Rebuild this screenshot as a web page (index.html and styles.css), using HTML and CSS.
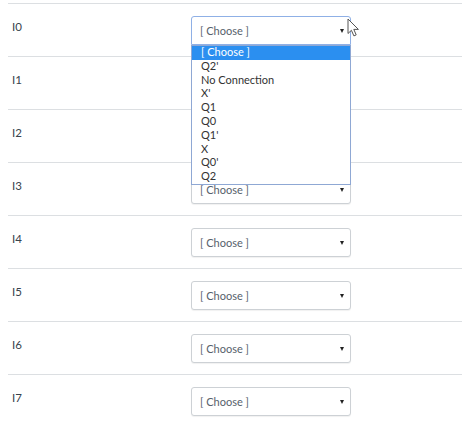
FILE: index.html
```html
<!DOCTYPE html>
<html>
<head>
<meta charset="utf-8">
<link rel="stylesheet" href="styles.css">
</head>
<body>
<div class="list">
  <div class="row">
    <div class="label">I0</div>
    <div class="cell">
      <div class="select focused"><span class="val">[ Choose ]</span><span class="arrow"></span></div>
      <ul class="dropdown">
        <li class="hl">[ Choose ]</li>
        <li>Q2'</li>
        <li>No Connection</li>
        <li>X'</li>
        <li>Q1</li>
        <li>Q0</li>
        <li>Q1'</li>
        <li>X</li>
        <li>Q0'</li>
        <li>Q2</li>
      </ul>
      <svg class="cursor" width="13" height="19" viewBox="0 0 13 19"><path d="M1 1 L1 15.5 L4.4 12.3 L6.9 17.9 L9.2 16.9 L6.8 11.4 L11.4 11.4 Z" fill="#fff" stroke="#555" stroke-width="1" stroke-linejoin="round"/></svg>
    </div>
  </div>
  <div class="row">
    <div class="label">I1</div>
    <div class="cell"><div class="select"><span class="val">[ Choose ]</span><span class="arrow"></span></div></div>
  </div>
  <div class="row">
    <div class="label">I2</div>
    <div class="cell"><div class="select"><span class="val">[ Choose ]</span><span class="arrow"></span></div></div>
  </div>
  <div class="row">
    <div class="label">I3</div>
    <div class="cell"><div class="select"><span class="val">[ Choose ]</span><span class="arrow"></span></div></div>
  </div>
  <div class="row">
    <div class="label">I4</div>
    <div class="cell"><div class="select"><span class="val">[ Choose ]</span><span class="arrow"></span></div></div>
  </div>
  <div class="row">
    <div class="label">I5</div>
    <div class="cell"><div class="select"><span class="val">[ Choose ]</span><span class="arrow"></span></div></div>
  </div>
  <div class="row">
    <div class="label">I6</div>
    <div class="cell"><div class="select"><span class="val">[ Choose ]</span><span class="arrow"></span></div></div>
  </div>
  <div class="row">
    <div class="label">I7</div>
    <div class="cell"><div class="select"><span class="val">[ Choose ]</span><span class="arrow"></span></div></div>
  </div>
</div>
</body>
</html>
```
FILE: styles.css
```css
html, body {
  margin: 0;
  padding: 0;
  background: #fff;
}
body {
  font-family: Lato, "Open Sans", sans-serif;
  font-size: 11px;
  color: #2d3b45;
}
.list {
  margin: 3px 0 0 8px;
  width: 454px;
}
.row {
  display: grid;
  grid-template-columns: 183px 160px;
  height: 53px;
  box-sizing: border-box;
  border-top: 1px solid #dcdfe2;
}
.label {
  padding: 15px 0 0 4px;
  line-height: 15px;
  font-size: 11.5px;
  color: #38434c;
}
.cell {
  position: relative;
  padding-top: 12px;
}
.select {
  box-sizing: border-box;
  height: 29px;
  border: 1px solid #cdd1d5;
  border-radius: 3px;
  display: flex;
  align-items: center;
  justify-content: space-between;
  padding: 0 6px 0 8px;
  box-shadow: 0 1px 1px rgba(0,0,0,0.06);
  background: #fff;
}
.select.focused {
  border-color: #8fb0e6;
  border-radius: 3px 3px 0 0;
}
.val {
  color: #56616b;
  font-size: 11px;
  padding-bottom: 1px;
}
.arrow {
  width: 0;
  height: 0;
  border-left: 2.5px solid transparent;
  border-right: 2.5px solid transparent;
  border-top: 4px solid #222;
  margin-right: 0;
}
.dropdown {
  position: absolute;
  left: 0;
  top: 41px;
  width: 160px;
  box-sizing: border-box;
  margin: 0;
  padding: 0;
  list-style: none;
  background: #fff;
  border: 1px solid #8fa8d4;
  z-index: 5;
}
.dropdown li {
  height: 11.8px;
  line-height: 11.8px;
  padding: 0 0 2px 9px;
  font-size: 11px;
  color: #333;
}
.dropdown li.hl {
  background: #2b8ff0;
  color: #fff;
}
.cursor {
  position: absolute;
  left: 156px;
  top: 14px;
  z-index: 6;
}
```
